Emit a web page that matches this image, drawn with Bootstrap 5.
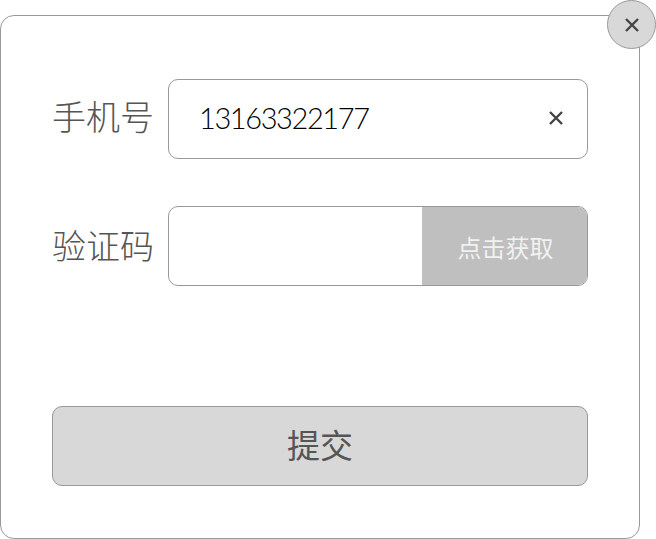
<!doctype html>
<html lang="zh">
<head>
<meta charset="utf-8">
<title>手机验证</title>
<link href="https://cdn.jsdelivr.net/npm/bootstrap@5.3.0/dist/css/bootstrap.min.css" rel="stylesheet">
<style>
html, body { height: 539px; overflow: hidden; background: #fff; }
body { font-family: "Liberation Sans", "Noto Sans CJK SC", sans-serif; }
.sheet { width: 640px; height: 524px; margin-top: 15px; padding: 63px 51px 0; border: 1px solid #999; border-radius: 14px; background: #fff; }
.close-disc { top: -16px; right: -17px; width: 49px; height: 49px; padding: 0; background: #d8d8d8; border: 1px solid #999; border-radius: 50%; }
.field-row { height: 80px; margin-bottom: 47px; }
.field-label { width: 116px; flex: none; font-size: 34px; line-height: 1; color: #555; font-weight: 300; }
.label-up { padding-bottom: 2px; }
.label-down { padding-top: 2px; }
.field-box { height: 80px; border: 1px solid #999; border-radius: 10px; overflow: hidden; background: #fff; }
.field-box .form-control { height: 78px; padding: 0 0 4px 30px; border: 0; border-radius: 0; box-shadow: none; background: transparent; color: #000; font-family: "Lato", "Noto Sans CJK SC", sans-serif; font-size: 29px; font-weight: 300; letter-spacing: -1.4px; }
.clear-btn { width: 62px; flex: none; padding: 0 0 2px; border: 0; background: transparent; }
.code-btn { width: 166px; height: 80px; flex: none; margin: -1px -1px -1px 0; padding: 5px 0 0 1px; border: 0; border-radius: 0; background: #bfbfbf; color: #f1f1f1; font-size: 24px; line-height: 1; }
.code-btn:disabled { background: #bfbfbf; color: #f1f1f1; opacity: 1; }
.submit-btn { width: 536px; height: 80px; margin-top: 120px; padding: 0; background: #d8d8d8; border: 1px solid #999; border-radius: 10px; color: #555; font-size: 33px; line-height: 1; }
.submit-btn:hover { background: #d8d8d8; border-color: #999; color: #555; }
.x-mark { display: block; margin: auto; stroke: #444; stroke-width: 2.4; fill: none; }
</style>
</head>
<body>
<div class="sheet position-relative">
  <button type="button" class="close-disc position-absolute d-flex align-items-center justify-content-center" aria-label="关闭">
    <svg class="x-mark" width="16" height="16" viewBox="0 0 16 16"><path d="M2 2 L14 14 M14 2 L2 14"/></svg>
  </button>
  <form>
    <div class="field-row d-flex align-items-center">
      <label class="field-label label-up" for="tel">手机号</label>
      <div class="field-box flex-grow-1 d-flex align-items-center">
        <input id="tel" class="form-control" type="text" value="13163322177">
        <button type="button" class="clear-btn d-flex align-items-center justify-content-center" aria-label="清除">
          <svg class="x-mark" width="16" height="16" viewBox="0 0 16 16"><path d="M2 2 L14 14 M14 2 L2 14"/></svg>
        </button>
      </div>
    </div>
    <div class="field-row d-flex align-items-center">
      <label class="field-label label-down" for="code">验证码</label>
      <div class="field-box flex-grow-1 d-flex align-items-center">
        <input id="code" class="form-control" type="text">
        <button type="button" class="btn code-btn" disabled>点击获取</button>
      </div>
    </div>
    <button type="button" class="btn submit-btn d-block">提交</button>
  </form>
</div>
</body>
</html>
